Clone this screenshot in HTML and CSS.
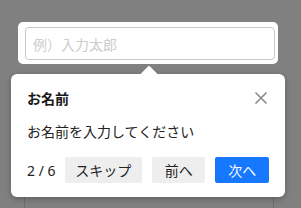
FILE: index.html
```html
<!DOCTYPE html>
<html lang="ja">
<head>
  <meta charset="UTF-8">
  <title>ツアー</title>
  <link rel="stylesheet" href="styles.css">
</head>
<body>
  <div class="page">
    <div class="highlight">
      <input class="name-input" type="text" placeholder="例）入力太郎">
    </div>
    <div class="next-field"></div>
  </div>

  <div class="tour-popover">
    <div class="tour-arrow"></div>
    <div class="tour-header">
      <span class="tour-title">お名前</span>
      <button class="tour-close" aria-label="閉じる">
        <svg width="14" height="14" viewBox="0 0 14 14">
          <path d="M1.5 1.5L12.5 12.5M12.5 1.5L1.5 12.5" stroke="#8a8a8a" stroke-width="1.6" fill="none"/>
        </svg>
      </button>
    </div>
    <div class="tour-body">お名前を入力してください</div>
    <div class="tour-footer">
      <span class="tour-step">2 / 6</span>
      <button class="tour-btn skip">スキップ</button>
      <button class="tour-btn prev">前へ</button>
      <button class="tour-btn next">次へ</button>
    </div>
  </div>
</body>
</html>
```

FILE: styles.css
```css
body {
  margin: 0;
  background-color: #808080;
  font-family: "Noto Sans CJK JP", "Noto Sans", sans-serif;
  color: #222;
  width: 301px;
  height: 208px;
  overflow: hidden;
  position: relative;
}
.page {
  padding-top: 22px;
}
.highlight {
  margin-left: 18px;
  width: 260px;
  height: 42px;
  box-sizing: border-box;
  padding: 5px 3px 4px 7px;
  background-color: #fff;
  border-radius: 5px;
}
.name-input {
  display: block;
  width: 250px;
  height: 33px;
  box-sizing: border-box;
  border: 1px solid #c8c8c8;
  border-radius: 4px;
  padding: 0 7px;
  font-family: inherit;
  font-size: 14px;
  outline: none;
}
.name-input::placeholder {
  color: #cccccc;
}
.next-field {
  margin: 116px 0 0 24px;
  width: 250px;
  height: 28px;
  box-sizing: border-box;
  border: 1px solid #6e6e6e;
  border-bottom: none;
}
.tour-popover {
  position: absolute;
  left: 11px;
  top: 74px;
  width: 274px;
  height: 123px;
  box-sizing: border-box;
  padding: 14px 16px 0 16px;
  background-color: #fff;
  border-radius: 6px;
  box-shadow: 0 2px 6px rgba(0, 0, 0, 0.25);
}
.tour-arrow {
  position: absolute;
  top: -6px;
  left: 132px;
  width: 12px;
  height: 12px;
  background-color: #fff;
  transform: rotate(45deg);
  border-radius: 1px;
}
.tour-header {
  position: relative;
  display: flex;
  align-items: center;
  justify-content: space-between;
  height: 20px;
}
.tour-title {
  font-size: 14px;
  font-weight: bold;
  color: #1a1a1a;
}
.tour-close {
  border: none;
  background: none;
  padding: 0;
  margin-right: 1px;
  width: 14px;
  height: 14px;
  cursor: pointer;
}
.tour-close svg {
  display: block;
}
.tour-body {
  margin-top: 13px;
  font-size: 14px;
  line-height: 20px;
  color: #222;
}
.tour-footer {
  display: flex;
  align-items: center;
  margin-top: 16px;
}
.tour-step {
  font-family: "Noto Sans", sans-serif;
  font-size: 14px;
  width: 38px;
  color: #222;
}
.tour-btn {
  height: 26px;
  border: none;
  border-radius: 2px;
  font-family: inherit;
  font-size: 14px;
  padding: 0;
  cursor: pointer;
}
.skip {
  width: 78px;
  background-color: #eeeeee;
  color: #222;
  margin-right: 10px;
}
.prev {
  width: 54px;
  background-color: #eeeeee;
  color: #222;
  margin-right: 10px;
}
.next {
  width: 54px;
  background-color: #1677ff;
  color: #fff;
}
```
